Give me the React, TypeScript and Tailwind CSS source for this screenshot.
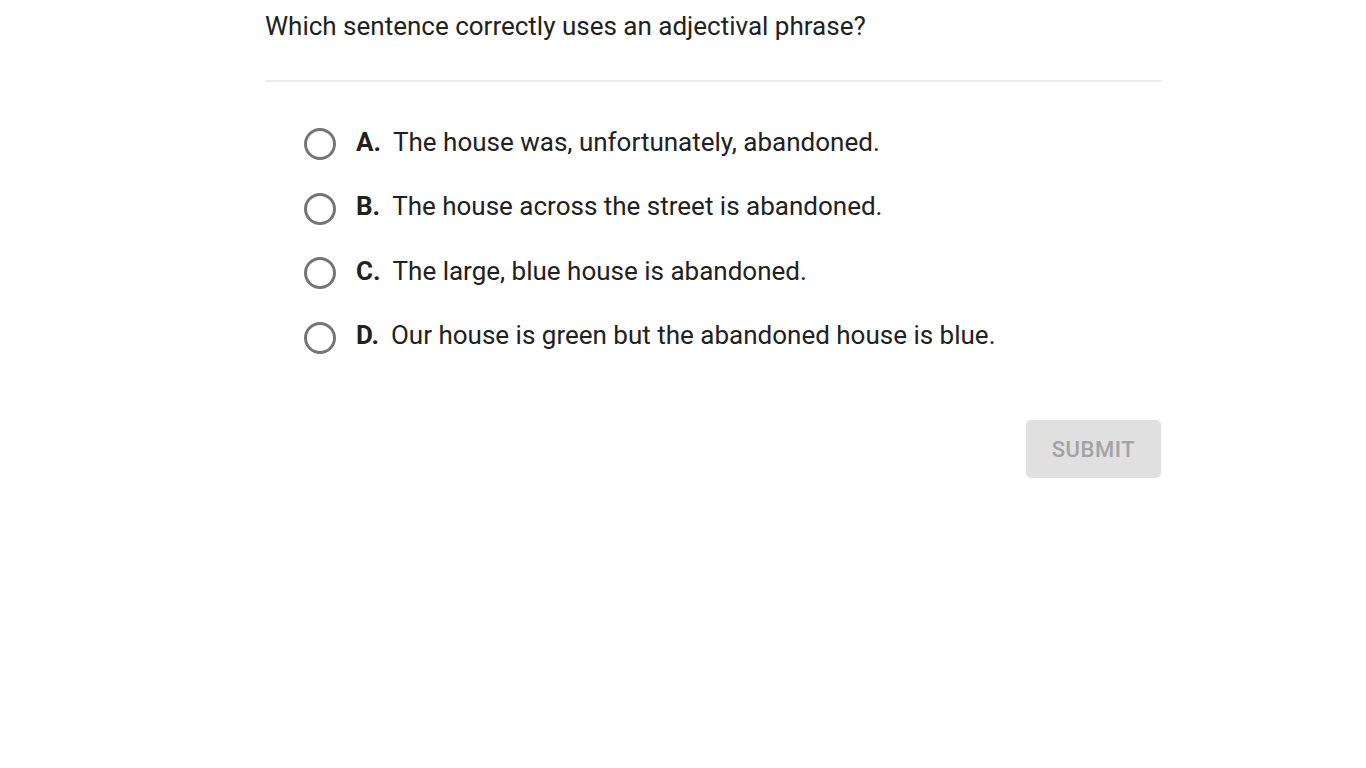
import React from 'react';

const options = [
  { letter: 'A.', text: 'The house was, unfortunately, abandoned.' },
  { letter: 'B.', text: 'The house across the street is abandoned.' },
  { letter: 'C.', text: 'The large, blue house is abandoned.' },
  { letter: 'D.', text: 'Our house is green but the abandoned house is blue.' },
];

export default function App() {
  return (
    <div className="min-h-screen bg-white text-[#212121]" style={{ fontFamily: 'Roboto, sans-serif' }}>
      <div className="w-[896px] ml-[265px]">
        <div className="pt-[11px] pb-[39px] border-b-2 border-[#ebebeb] text-[26px] leading-[30px]">
          Which sentence correctly uses an adjectival phrase?
        </div>
        <div className="pl-[39px] pt-[46px] flex flex-col gap-[32.6px]">
          {options.map((o) => (
            <label key={o.letter} className="flex items-center h-[32px] cursor-pointer">
              <span className="w-[32px] h-[32px] rounded-full border-[3px] border-[#757575] shrink-0" />
              <span className="flex items-center pb-[5px]">
                <span className="ml-[20px] font-bold text-[26px] leading-[32px]">{o.letter}</span>
                <span className="ml-[12px] text-[26px] leading-[32px]">{o.text}</span>
              </span>
            </label>
          ))}
        </div>
        <div className="flex justify-end mt-[66px]">
          <button className="w-[135px] h-[58px] rounded-[5px] bg-[#e0e0e0] text-[#a3a3a3] text-[22px] font-medium tracking-wide pt-[1px]">
            SUBMIT
          </button>
        </div>
      </div>
    </div>
  );
}
